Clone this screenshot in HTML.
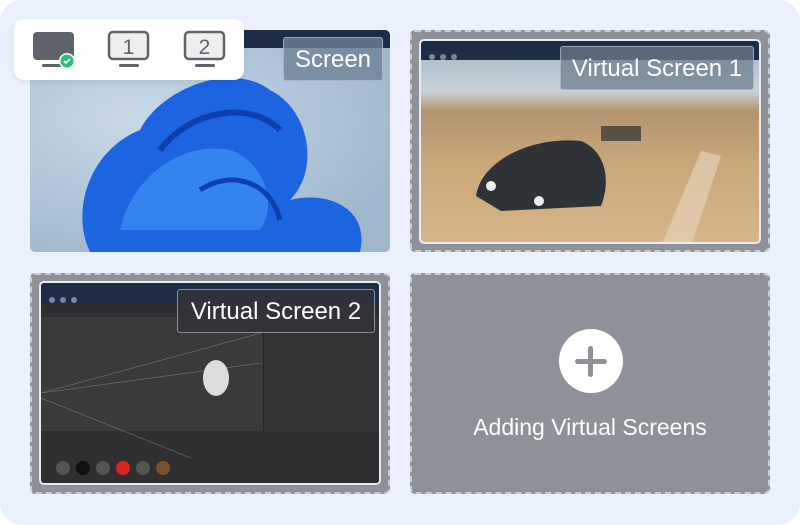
<!DOCTYPE html>
<html><head><style>
*{margin:0;padding:0;box-sizing:border-box}
body{width:800px;height:525px;background:#fff;font-family:"Liberation Sans",sans-serif;overflow:hidden;position:relative}
.bg{position:absolute;left:0;top:0;width:800px;height:525px;background:#eaf1fd;border-radius:22px}
.card{position:absolute;overflow:hidden}
.dash{position:absolute;background:#8e9197;border:2px dashed #c9ccd2;border-radius:5px}
.inner{position:absolute;border:2px solid #e8ebef;border-radius:5px;overflow:hidden}
.tb{position:absolute;left:0;top:0;right:0;background:#1d2d48}
.dots{position:absolute;left:8px;top:6px}
.dots i{display:inline-block;width:6px;height:6px;border-radius:50%;background:#7c8699;margin-right:5px}
.lbl{position:absolute;background:rgba(100,110,125,.75);border:1px solid rgba(200,205,215,.6);border-radius:3px;color:#fff;font-size:24px;text-align:center;white-space:nowrap}
</style></head><body>
<div class="bg"></div>

<!-- Screen -->
<div class="card" style="left:30px;top:30px;width:360px;height:222px;border-radius:5px;background:radial-gradient(ellipse at 30% 40%,#c8d9e8,#9fb7cc 80%)">
  <div class="tb" style="height:18px"></div>
  <svg style="position:absolute;left:0;top:0" width="360" height="222">
    <path d="M60 222 C40 180 60 120 110 100 C130 60 200 30 240 60 C280 80 290 140 260 170 C300 160 340 180 330 222 Z" fill="#1d64e0"/>
    <path d="M90 200 C100 150 150 110 200 120 C230 130 250 170 230 200 Z" fill="#3b8cf2" opacity=".8"/>
    <path d="M130 120 C160 80 220 70 250 100" stroke="#0d3fb0" stroke-width="6" fill="none"/>
    <path d="M170 160 C200 140 240 150 250 190" stroke="#0d3fb0" stroke-width="5" fill="none"/>
  </svg>
  <div class="lbl" style="left:253px;top:7px;width:100px;height:44px;line-height:44px;background:rgba(110,130,150,.8)">Screen</div>
</div>

<!-- popup -->
<div style="position:absolute;left:14px;top:19px;width:230px;height:61px;background:#fff;border-radius:10px;box-shadow:0 2px 6px rgba(0,0,0,.08)">
  <svg width="230" height="61">
    <rect x="19" y="13" width="41" height="28" rx="4" fill="#5f636b"/>
    <rect x="28" y="45" width="20" height="3" rx="1.5" fill="#5f636b"/>
    <circle cx="53" cy="42" r="8" fill="#fff"/><circle cx="53" cy="42" r="6.5" fill="#2dbd7a"/>
    <path d="M50 42 l2 2 l4 -4" stroke="#fff" stroke-width="1.6" fill="none"/>
    <rect x="95" y="13" width="39" height="27" rx="4" fill="#eee" stroke="#5f636b" stroke-width="2.5"/>
    <rect x="105" y="45" width="20" height="3" rx="1.5" fill="#5f636b"/>
    <text x="114.5" y="35" font-size="21" fill="#5f636b" text-anchor="middle" font-family="Liberation Sans">1</text>
    <rect x="171" y="13" width="39" height="27" rx="4" fill="#eee" stroke="#5f636b" stroke-width="2.5"/>
    <rect x="181" y="45" width="20" height="3" rx="1.5" fill="#5f636b"/>
    <text x="190.5" y="35" font-size="21" fill="#5f636b" text-anchor="middle" font-family="Liberation Sans">2</text>
  </svg>
</div>

<!-- Virtual 1 -->
<div class="dash" style="left:410px;top:30px;width:360px;height:222px"></div>
<div class="inner" style="left:419px;top:39px;width:342px;height:205px;background:linear-gradient(180deg,#9fb8cc 0%,#c9d2d6 25%,#b39470 35%,#c9a77a 60%,#d6b589 100%)">
  <div class="tb" style="height:19px"></div>
  <div class="dots"><i></i><i></i><i></i></div>
  <svg style="position:absolute;left:0;top:0" width="342" height="205">
    <path d="M55 155 C60 120 110 95 160 100 C185 110 190 140 180 165 L80 170 Z" fill="#2f3338"/>
    <circle cx="70" cy="145" r="5" fill="#eee"/><circle cx="118" cy="160" r="5" fill="#eee"/>
    <path d="M240 205 L280 110 L300 115 L270 205 Z" fill="#e2d2b6" opacity=".7"/>
    <rect x="180" y="85" width="40" height="15" fill="#5a4f44"/>
  </svg>
  <div class="lbl" style="left:139px;top:5px;width:194px;height:44px;line-height:44px;background:rgba(110,125,140,.75)">Virtual Screen 1</div>
</div>

<!-- Virtual 2 -->
<div class="dash" style="left:30px;top:273px;width:360px;height:221px"></div>
<div class="inner" style="left:39px;top:281px;width:342px;height:204px;background:#3a3a3c">
  <div class="tb" style="height:20px"></div>
  <div class="dots" style="top:7px"><i></i><i></i><i></i></div>
  <div style="position:absolute;left:0;top:20px;width:342px;height:14px;background:#2e2e30"></div>
  <div style="position:absolute;left:222px;top:34px;width:120px;height:170px;background:#333335;border-left:1px solid #222"></div>
  <div style="position:absolute;left:0;top:148px;width:342px;height:56px;background:#2f2f31"></div>
  <svg style="position:absolute;left:0;top:0" width="342" height="204">
    <path d="M0 110 L220 50 M0 110 L220 80 M0 115 L150 175" stroke="#777" stroke-width=".6"/>
    <ellipse cx="175" cy="95" rx="13" ry="18" fill="#ddd"/>
    <g fill="#555"><circle cx="22" cy="185" r="7"/><circle cx="42" cy="185" r="7" fill="#111"/><circle cx="62" cy="185" r="7"/><circle cx="82" cy="185" r="7" fill="#d22"/><circle cx="102" cy="185" r="7"/><circle cx="122" cy="185" r="7" fill="#7a5030"/></g>
  </svg>
  <div class="lbl" style="left:136px;top:6px;width:198px;height:44px;line-height:44px;background:rgba(50,52,56,.85)">Virtual Screen 2</div>
</div>

<!-- Add -->
<div class="dash" style="left:410px;top:273px;width:360px;height:221px"></div>
<div style="position:absolute;left:559px;top:329px;width:64px;height:64px;border-radius:50%;background:#fff"></div>
<div style="position:absolute;left:575px;top:359px;width:32px;height:5px;border-radius:3px;background:#8e9197"></div>
<div style="position:absolute;left:588px;top:346px;width:5px;height:31px;border-radius:3px;background:#8e9197"></div>
<div style="position:absolute;left:410px;top:414px;width:360px;text-align:center;color:#fff;font-size:23px">Adding Virtual Screens</div>
</body></html>
